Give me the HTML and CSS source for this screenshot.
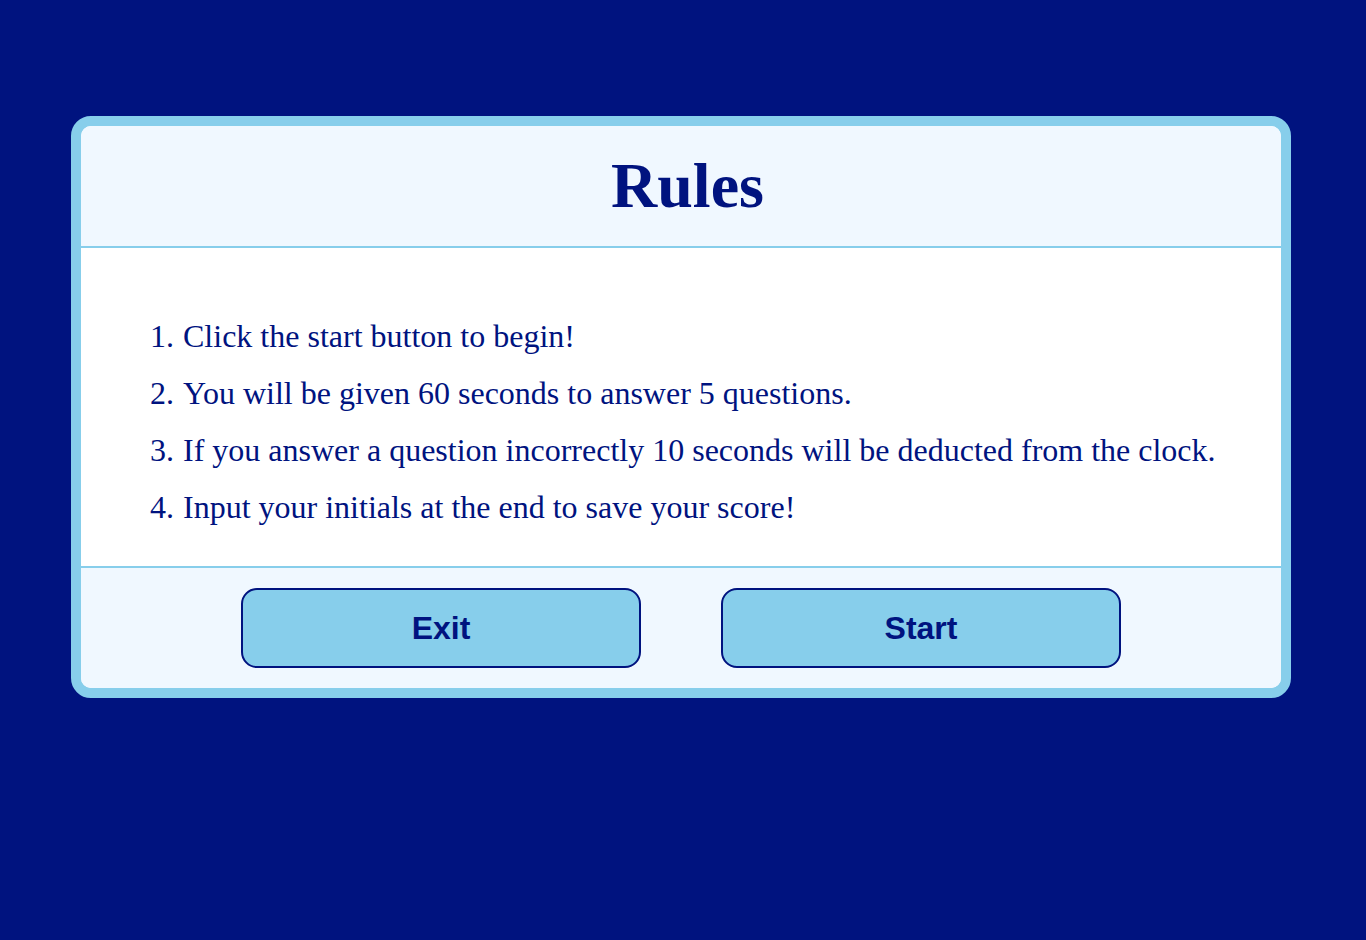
FILE: index.html
```html
<!DOCTYPE html>
<html lang="en">
<head>
<meta charset="utf-8">
<title>Rules</title>
<link rel="stylesheet" href="styles.css">
</head>
<body>
<main class="rules-box">
  <header class="rules-header">
    <h1 class="rules-title">Rules</h1>
  </header>
  <section class="rules-body">
    <ol class="rules-list">
      <li>Click the start button to begin!</li>
      <li>You will be given 60 seconds to answer 5 questions.</li>
      <li>If you answer a question incorrectly 10 seconds will be deducted from the clock.</li>
      <li>Input your initials at the end to save your score!</li>
    </ol>
  </section>
  <footer class="rules-footer">
    <button class="btn" type="button">Exit</button>
    <button class="btn" type="button">Start</button>
  </footer>
</main>
</body>
</html>
```

FILE: styles.css
```css
html, body {
  margin: 0;
  background: #00137f;
}
body {
  padding: 116px 75px 0 71px;
  min-height: 940px;
  box-sizing: border-box;
  font-family: "Liberation Serif", "Times New Roman", serif;
  color: #00137f;
}
.rules-box {
  border: 10px solid #87ceeb;
  border-radius: 20px;
  background: #ffffff;
  display: flex;
  flex-direction: column;
}
.rules-header {
  background: #f0f8ff;
  border-radius: 10px 10px 0 0;
  border-bottom: 2px solid #87ceeb;
  height: 122px;
  box-sizing: border-box;
  display: flex;
  align-items: center;
  justify-content: center;
}
.rules-title {
  margin: 0;
  font-size: 64px;
  font-weight: bold;
  line-height: 1;
  padding-left: 13px;
}
.rules-body {
  height: 318px;
  box-sizing: border-box;
  padding-top: 70px;
}
.rules-list {
  margin: 0;
  padding-left: 102px;
  font-size: 32px;
  line-height: 37px;
  list-style: none;
  counter-reset: rule;
}
.rules-list li {
  counter-increment: rule;
  margin-bottom: 20px;
}
.rules-list li::before {
  content: counter(rule) ".";
  display: inline-block;
  width: 33px;
  margin-left: -33px;
}
.rules-footer {
  background: #f0f8ff;
  border-top: 2px solid #87ceeb;
  border-radius: 0 0 10px 10px;
  height: 122px;
  box-sizing: border-box;
  padding-top: 20px;
  display: flex;
  justify-content: center;
  gap: 80px;
}
.btn {
  width: 400px;
  height: 80px;
  box-sizing: border-box;
  border: 2px solid #00137f;
  border-radius: 16px;
  background: #87ceeb;
  color: #00137f;
  font-family: "Liberation Sans", Arial, sans-serif;
  font-weight: bold;
  font-size: 32px;
  padding: 0;
}
```
